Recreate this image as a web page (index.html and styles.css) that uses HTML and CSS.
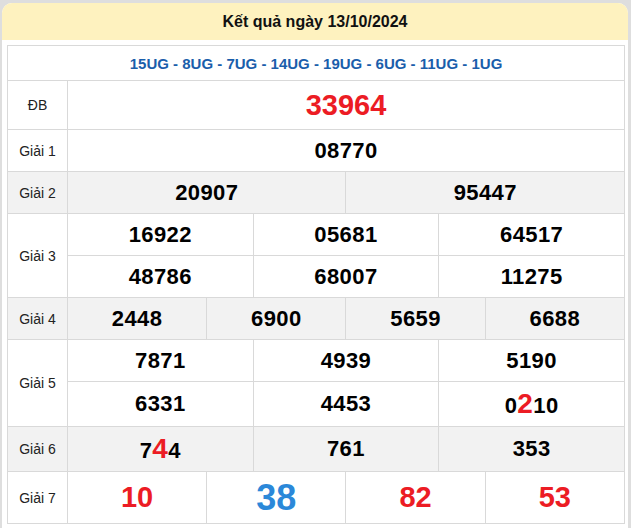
FILE: index.html
```html
<!DOCTYPE html>
<html lang="vi">
<head>
<meta charset="utf-8">
<title>Kết quả ngày 13/10/2024</title>
<link rel="stylesheet" href="styles.css">
</head>
<body>
<div class="card">
  <div class="card-head">Kết quả ngày 13/10/2024</div>
  <div class="card-body">
    <table class="kq">
      <colgroup>
        <col class="c-label">
        <col><col><col><col><col><col><col><col><col><col><col><col>
      </colgroup>
      <tr class="r-ug"><td colspan="13" class="ug">15UG - 8UG - 7UG - 14UG - 19UG - 6UG - 11UG - 1UG</td></tr>
      <tr class="r-db"><td class="lbl">ĐB</td><td colspan="12" class="num db">33964</td></tr>
      <tr class="r-42"><td class="lbl">Giải 1</td><td colspan="12" class="num">08770</td></tr>
      <tr class="r-42 alt"><td class="lbl">Giải 2</td><td colspan="6" class="num">20907</td><td colspan="6" class="num">95447</td></tr>
      <tr class="r-42"><td class="lbl" rowspan="2">Giải 3</td><td colspan="4" class="num">16922</td><td colspan="4" class="num">05681</td><td colspan="4" class="num">64517</td></tr>
      <tr class="r-42"><td colspan="4" class="num">48786</td><td colspan="4" class="num">68007</td><td colspan="4" class="num">11275</td></tr>
      <tr class="r-42 alt"><td class="lbl">Giải 4</td><td colspan="3" class="num">2448</td><td colspan="3" class="num">6900</td><td colspan="3" class="num">5659</td><td colspan="3" class="num">6688</td></tr>
      <tr class="r-42"><td class="lbl" rowspan="2">Giải 5</td><td colspan="4" class="num">7871</td><td colspan="4" class="num">4939</td><td colspan="4" class="num">5190</td></tr>
      <tr class="r-45"><td colspan="4" class="num">6331</td><td colspan="4" class="num">4453</td><td colspan="4" class="num">0<span class="hl">2</span>10</td></tr>
      <tr class="r-45 alt"><td class="lbl">Giải 6</td><td colspan="4" class="num">7<span class="hl">4</span>4</td><td colspan="4" class="num">761</td><td colspan="4" class="num">353</td></tr>
      <tr class="r-52"><td class="lbl">Giải 7</td><td colspan="3" class="num g7 red">10</td><td colspan="3" class="num g7 blue">38</td><td colspan="3" class="num g7 red">82</td><td colspan="3" class="num g7 red">53</td></tr>
    </table>
  </div>
</div>
</body>
</html>
```
FILE: styles.css
```css
html, body {
  margin: 0;
  padding: 0;
}
body {
  background: #dedede;
  font-family: "Liberation Sans", Arial, sans-serif;
  color: #222;
}
.card {
  width: 626px;
  margin: 3px 0 0 2px;
  background: #fff;
  border-radius: 10px 10px 0 0;
  overflow: hidden;
  min-height: 525px;
}
.card-head {
  background: #fef2bf;
  height: 37px;
  line-height: 37px;
  text-align: center;
  font-weight: bold;
  font-size: 16px;
  color: #111;
}
.card-body {
  padding: 5px 3px 0 5px;
}
.kq {
  width: 618px;
  border-collapse: collapse;
  table-layout: fixed;
}
.c-label {
  width: 60px;
}
.kq td {
  border: 1px solid #d9d9d9;
  padding: 0;
  text-align: center;
  vertical-align: middle;
}
.ug {
  color: #1a5eab;
  font-weight: bold;
  font-size: 15px;
}
.r-ug { height: 35px; }
.r-db { height: 49px; }
.r-42 { height: 42px; }
.r-45 { height: 45px; }
.r-52 { height: 52px; }
.alt td {
  background: #f2f2f2;
}
.lbl {
  font-size: 14px;
  color: #222;
}
.num {
  font-weight: bold;
  font-size: 22px;
  color: #000;
  letter-spacing: 0.4px;
  line-height: 1;
}
.db {
  color: #ec1c24;
  font-size: 29px;
  letter-spacing: 0;
}
.hl {
  color: #ec1c24;
  font-size: 28px;
}
.g7 {
  font-size: 29px;
  letter-spacing: 0;
}
.red {
  color: #ec1c24;
}
.blue {
  color: #2b88d9;
  font-size: 36px;
}
```
